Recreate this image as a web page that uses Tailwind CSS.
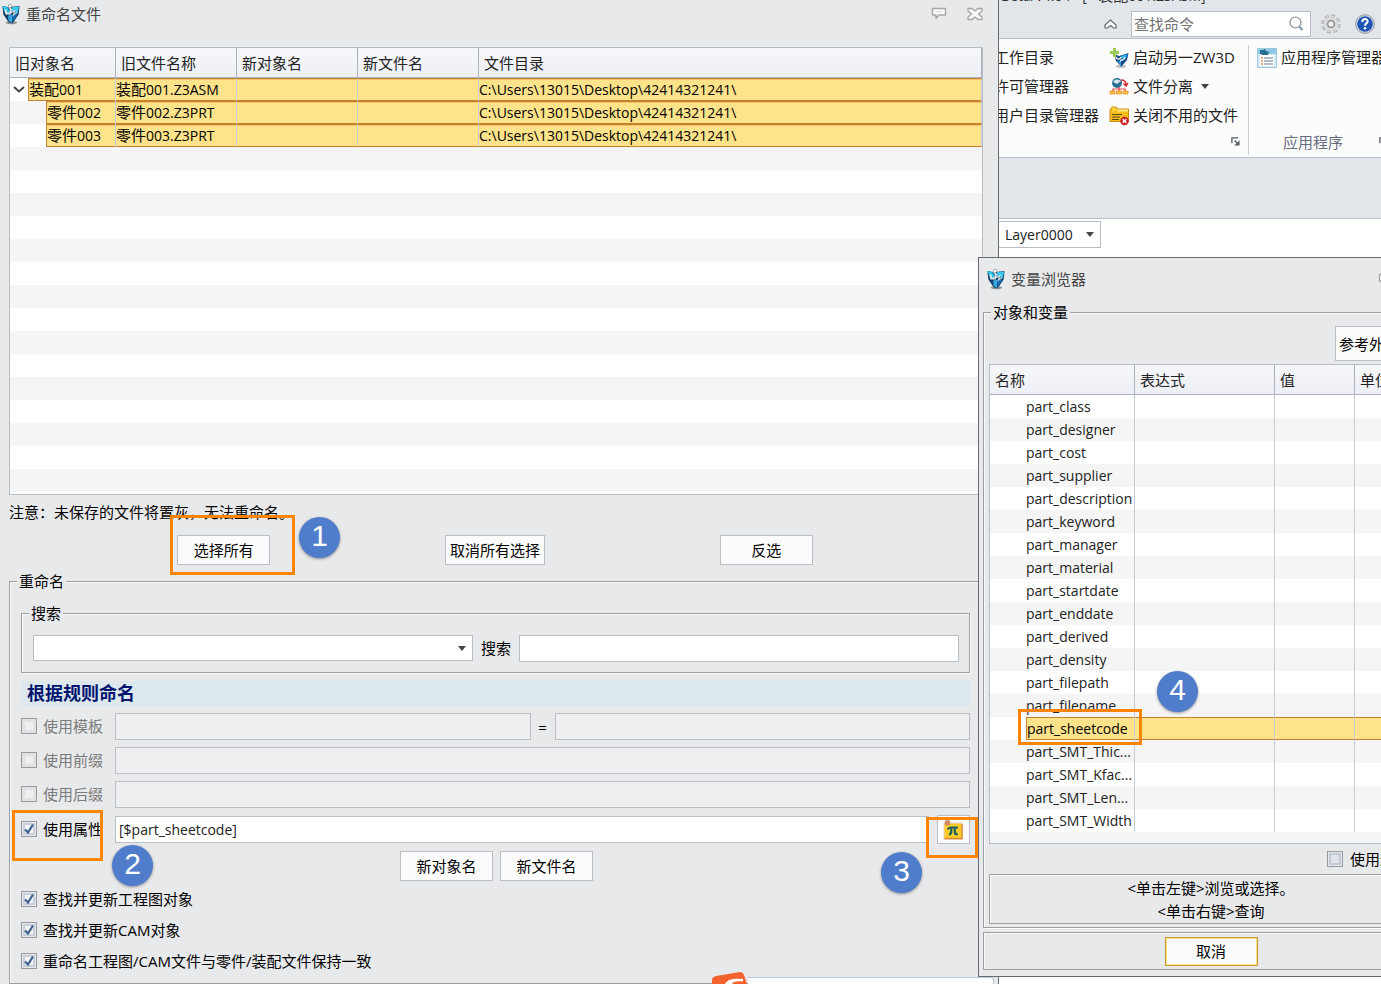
<!DOCTYPE html>
<html lang="zh-CN">
<head>
<meta charset="utf-8">
<title>重命名文件</title>
<script src="https://cdn.jsdelivr.net/npm/@tailwindcss/browser@4"></script>
</head>
<body class="relative h-screen overflow-hidden bg-white font-['Open_Sans','Noto_Sans_CJK_SC',sans-serif] text-[15px] leading-5 text-black">

<svg class="hidden" aria-hidden="true">
  <symbol id="logo" viewBox="0 0 20 22">
    <ellipse cx="10.500" cy="19.500" rx="6" ry="1.800" fill="#8f9599"/>
    <path d="M1 2 7 3.500 19 2 18 11 11.500 20.500 7.500 19 2 11Z" fill="#123f6e"/>
    <path d="M1 2 6 3 9 8 4.500 11Z" fill="#27c4ea"/>
    <path d="M11 3.500 18.500 2.500 17 9.500 11 8Z" fill="#35c9ee"/>
    <path d="M7 12 11.500 11 11 20 7.500 17.500Z" fill="#37a9e0"/>
    <path d="M12 11.500 17 11 11.500 18.500Z" fill="#1570b8"/>
    <path d="M4 5.500 5 10 9 10 10 6 8 3" fill="none" stroke="#dfe7ea" stroke-width="2"/>
    <path d="M10 9 14 7 12.500 11.500 16.500 9" fill="none" stroke="#c9d4d8" stroke-width="1.300"/>
    <circle cx="9" cy="2.200" r="1.900" fill="#fff" stroke="#7d868b" stroke-width=".7"/>
  </symbol>
  <symbol id="bubble" viewBox="0 0 16 14">
    <path d="M1.500 1.500h13v6.500H8L5 11.500V8H1.500Z" fill="#fafafa" stroke="#a3a5a8" stroke-width="1.400" stroke-linejoin="round"/>
    <path d="M4 4.500h8" stroke="#dcdddf"/>
  </symbol>
  <symbol id="tick" viewBox="0 0 16 16">
    <path d="M4 8.500 7 11.500 12 3.500" fill="none" stroke="#3f5f8c" stroke-width="2.200"/>
  </symbol>
  <symbol id="down" viewBox="0 0 8 5"><path d="M0 0h8L4 5Z" fill="#444"/></symbol>
  <symbol id="launch" viewBox="0 0 10 10">
    <path d="M1 7V1h7" fill="none" stroke="#5a5f69" stroke-width="1.500"/><path d="M9.500 3.500v6H3.500Z" fill="#5a5f69"/><path d="M4 4 8 8" stroke="#5a5f69" stroke-width="1.500"/>
  </symbol>
</svg>

<!-- Application window -->
<main class="absolute inset-0 bg-white">
  <header class="relative flex h-[39px] items-center border-b border-[#b8bec6] bg-[#e2e6ea] pt-[9px] pl-[1104px]">
    <p class="absolute -top-[15px] left-[1001px] text-[14px] whitespace-pre text-[#333]">Beta/v4.04 - [ *<span class="text-[15px]">装配</span>001.Z3ASM]</p>
    <button aria-label="折叠功能区"><svg class="h-[10px] w-[13px]" viewBox="0 0 13 10"><path d="M1 6 6.500 1 12 6v3H9.500L6.500 6.500 3.500 9H1Z" fill="#fff" stroke="#666b72" stroke-width="1.200"/></svg></button>
    <div class="ml-[14px] flex h-[26px] w-[180px] shrink-0 items-center border border-[#b8bec6] bg-white pr-1.5 pl-[2px]">
      <input type="text" aria-label="查找命令" placeholder="查找命令" class="min-w-0 flex-1 outline-none placeholder:text-[#737373]">
      <svg class="size-[15px]" viewBox="0 0 15 15"><circle cx="6.500" cy="6.500" r="5.500" fill="#fff" stroke="#888c92" stroke-width="1.200"/><path d="m10.500 11 3 3" stroke="#6e94ab" stroke-width="1.800"/></svg>
    </div>
    <button class="ml-[10px] shrink-0" aria-label="设置"><svg class="size-5" viewBox="0 0 20 20"><circle cx="10" cy="10" r="8" fill="none" stroke="#98999c" stroke-width="3" stroke-dasharray="3.600 2.680"/><circle cx="10" cy="10" r="8" fill="none" stroke="#dcddde" stroke-width="1.500" stroke-dasharray="3 3.280" stroke-dashoffset="-.3"/><circle cx="10" cy="10" r="7" fill="#dcddde"/><circle cx="10" cy="10" r="3.400" fill="#f2f3f4" stroke="#98999c" stroke-width="1.800"/></svg></button>
    <button class="ml-[14px] shrink-0" aria-label="帮助"><svg class="size-5" viewBox="0 0 20 20"><circle cx="10" cy="10" r="9.300" fill="#d9dde3" stroke="#8e959f"/><circle cx="10" cy="10" r="7.800" fill="#2155b5"/><path d="M7.300 8c0-4 5.600-3.600 5.400-.6-.1 2-2.700 2-2.700 4.400" fill="none" stroke="#fff" stroke-width="2"/><circle cx="10" cy="14.300" r="1.300" fill="#fff"/></svg></button>
  </header>
  <section class="flex h-[119px] border-b border-[#b8bec6] bg-[#fcfcfc] pl-[994px] whitespace-nowrap text-[#222]">
    <div class="relative flex w-[255px] shrink-0">
      <ul class="w-[115px] pt-1 leading-[29px]">
        <li>工作目录</li><li>许可管理器</li><li>用户目录管理器</li>
      </ul>
      <ul class="pt-1 leading-[29px]">
        <li class="flex items-center gap-1"><svg class="size-5" viewBox="0 0 20 20"><ellipse cx="12" cy="18.500" rx="5" ry="1.400" fill="#b9bdc0"/><path d="M5 6 10 8 19.500 5 18 12 12.500 18.500 7 13Z" fill="#164b88"/><path d="m12 8 6.500-2-2 5-4.500-1Z" fill="#2bb2e4"/><path d="m8 13 4 0v5Z" fill="#2f93cf"/><path d="M7 9c1 3 4 3 5 0M11 13l4-2 1-2" fill="none" stroke="#e2e9ee" stroke-width="1.500"/><path d="M5.500 0v9M1 4.500h9" stroke="#9ac956" stroke-width="3"/></svg><span>启动另一<span class="text-[15px]">ZW3D</span></span></li>
        <li class="flex items-center gap-1"><svg class="size-5" viewBox="0 0 20 20"><circle cx="8" cy="6" r="5" fill="#2a6f8f"/><path d="M4 5c3-4 6-2 8-1L8 7Z" fill="#d6e6ec"/><path d="M12 3c4 0 5 2 5 5m-2.500-1.500L17 9l2-3" fill="none" stroke="#d8333a" stroke-width="1.600"/><path d="M4 14v-2h12v2M10 10v4" stroke="#e34349" fill="none" stroke-width="1.200"/><path d="M1 14h5v3H1Zm6.500 0h5v3h-5Zm6.500 0h5v3h-5Z" fill="#ffc83a" stroke="#e28b2d" stroke-width=".8"/></svg>文件分离<svg class="ml-1 h-[5px] w-2"><use href="#down"/></svg></li>
        <li class="flex items-center gap-1"><svg class="size-5" viewBox="0 0 20 20"><path d="M1 4 3 1h4l2 2h10.500v12.500H1Z" fill="#f7bd1c" stroke="#cf8b19"/><path d="M8 4.500h11" stroke="#ffe77a" stroke-width="2"/><circle cx="5" cy="3.500" r="2.300" fill="#ffcf3a"/><path d="M3 8.500h10M3 11h8M3 13.500h7" stroke="#5b4715" stroke-width="1.200"/><circle cx="15.500" cy="15" r="4.300" fill="#cd2026"/><path d="m13.700 13.200 3.600 3.600m0-3.600-3.600 3.600" stroke="#fff" stroke-width="1.500"/></svg>关闭不用的文件</li>
      </ul>
      <svg class="absolute right-[9px] bottom-[11px] size-[9px]"><use href="#launch"/></svg>
      <i class="absolute right-0 bottom-0.5 h-[110px] w-px bg-[#c9cfd8]"></i>
    </div>
    <div class="relative flex flex-1 flex-col justify-between pt-1 pb-[5px]">
      <p class="flex items-center gap-1 pl-2 leading-[29px]"><svg class="size-5 shrink-0" viewBox="0 0 20 20"><path d="M.5.500h19v19H.5Z" fill="#d5ebf6" stroke="#9fc7dc"/><path d="M1 1h18v5H1Z" fill="#8cc9e6"/><path d="M3 7h14v11H3Z" fill="#fff"/><path d="M3 2h3l2-1 1 2 3 1-1 3H6L3 6Z" fill="#2a6d92"/><path d="M4 10h2m-2 3h2m-2 3h2" stroke="#e28a5a" stroke-width="1.300"/><path d="M7 10h9m-9 3h9m-9 3h9" stroke="#97a8b2" stroke-width="1.300"/></svg>应用程序管理器</p>
      <p class="pl-[34px] text-[#666b7e]">应用程序</p>
      <svg class="absolute bottom-[11px] left-[130px] size-[9px]"><use href="#launch"/></svg>
    </div>
  </section>
  <div class="h-[60px] bg-[#e2e6e9]"></div>
  <div class="flex border-t border-[#b8bec6] bg-white pt-0.5 pb-[11px] pl-[998px]">
    <label class="flex h-[27px] w-[103px] items-center border border-[#b8bec6] bg-white pr-1.5 pl-1.5">
      <select aria-label="图层" class="min-w-0 flex-1 appearance-none text-[14px] text-[#222]"><option>Layer0000</option></select>
      <svg class="h-[5px] w-2"><use href="#down"/></svg>
    </label>
  </div>
</main>

<!-- Rename dialog -->
<section class="absolute inset-y-0 left-0 flex w-[999px] flex-col border-r border-[#656b72] bg-[#e8e9eb]" aria-label="重命名文件">
  <header class="flex h-[47px] shrink-0 items-start pt-1 pr-[15px] text-[#444]">
    <svg class="ml-px h-[21px] w-5"><use href="#logo"/></svg>
    <h1 class="ml-[5px] flex-1">重命名文件</h1>
    <button class="mt-[3px]" aria-label="反馈"><svg class="h-[14px] w-4"><use href="#bubble"/></svg></button>
    <button class="mt-[3px] ml-5" aria-label="关闭"><svg class="h-[14px] w-4" viewBox="0 0 16 14"><path d="M1 1.500h4L8 4l3-2.500h4V4l-3.500 3 3.500 3v2.500h-4L8 10l-3 2.500H1V10l3.500-3L1 4Z" fill="#fafafa" stroke="#a3a5a8" stroke-width="1.300"/></svg></button>
  </header>

  <div class="mr-[15px] ml-[9px] h-[448px] shrink-0 overflow-hidden border border-[#b6bcc6] bg-[repeating-linear-gradient(to_bottom,#ffffff_0px,#ffffff_23px,#f5f5f5_23px,#f5f5f5_46px)] bg-[position:0_30px]">
    <table class="w-full table-fixed border-separate border-spacing-0 whitespace-nowrap [&_td]:h-[23px] [&_td]:border-r [&_td]:border-r-[#c6ccd8] [&_td]:p-0">
      <colgroup><col class="w-[106px]"><col class="w-[121px]"><col class="w-[121px]"><col class="w-[121px]"><col></colgroup>
      <thead>
        <tr class="h-[30px] bg-linear-to-b from-[#f6f7fa] to-[#eceff4] text-left text-[#222] [&>th]:border-r [&>th]:border-b [&>th]:border-[#a9b1be] [&>th]:py-0 [&>th]:pl-[5px] [&>th]:font-normal">
          <th>旧对象名</th><th>旧文件名称</th><th>新对象名</th><th>新文件名</th><th>文件目录</th>
        </tr>
      </thead>
      <tbody class="[&_td+td]:border-y [&_td+td]:border-y-[#c4822e] [&_td+td]:bg-[#ffe38a] [&_td+td]:shadow-[inset_0_1px_0_#f7c36a]">
        <tr class="bg-white"><td><div class="flex items-center"><svg class="mr-[3px] ml-[3px] h-[7px] w-3" viewBox="0 0 12 7"><path d="m1 1 5 4.500L11 1" fill="none" stroke="#444" stroke-width="2"/></svg><span class="h-[23px] flex-1 border border-r-0 border-[#c4822e] bg-[#ffe38a] shadow-[inset_0_1px_0_#f7c36a]">装配<span class="text-[14px]">001</span></span></div></td><td>装配<span class="text-[14px]">001.Z3ASM</span></td><td></td><td></td><td class="text-[14px]">C:\Users\13015\Desktop\42414321241\</td></tr>
        <tr class="bg-[#f5f5f5]"><td><div class="ml-9 h-[23px] border border-r-0 border-[#c4822e] bg-[#ffe38a] shadow-[inset_0_1px_0_#f7c36a]">零件<span class="text-[14px]">002</span></div></td><td>零件<span class="text-[14px]">002.Z3PRT</span></td><td></td><td></td><td class="text-[14px]">C:\Users\13015\Desktop\42414321241\</td></tr>
        <tr class="bg-white"><td><div class="ml-9 h-[23px] border border-r-0 border-[#c4822e] bg-[#ffe38a] shadow-[inset_0_1px_0_#f7c36a]">零件<span class="text-[14px]">003</span></div></td><td>零件<span class="text-[14px]">003.Z3PRT</span></td><td></td><td></td><td class="text-[14px]">C:\Users\13015\Desktop\42414321241\</td></tr>
      </tbody>
    </table>
  </div>

  <p class="mt-[7px] ml-[9px]">注意：未保存的文件将置灰，无法重命名。</p>
  <div class="mt-[13px] mr-[96px] ml-[88px] grid grid-cols-3 justify-items-center [&>button]:h-[30px] [&>button]:min-w-[93px] [&>button]:border [&>button]:border-[#b9bfc8] [&>button]:bg-[#fcfcfd] [&>button]:px-1 [&>button]:whitespace-nowrap">
    <button>选择所有</button><button>取消所有选择</button><button>反选</button>
  </div>

  <fieldset class="mt-[6px] mr-[15px] ml-[9px] h-[413px] shrink-0 border border-[#9b9ea3] pr-3 pl-[11px] shadow-[inset_1px_1px_0_#fafafa]">
    <legend class="-ml-1 bg-[#e8e9eb] px-[2px]">重命名</legend>
    <fieldset class="mt-3 flex h-[70px] items-start border border-[#9b9ea3] pt-3 pr-[10px] pl-[11px] shadow-[inset_1px_1px_0_#fafafa,1px_1px_0_#fafafa]">
      <legend class="-ml-1 bg-[#e8e9eb] px-[2px]">搜索</legend>
      <div class="flex h-[26px] flex-1 items-center border border-[#b9bfc8] bg-white pr-1.5">
        <select aria-label="搜索类型" class="h-full min-w-0 flex-1 appearance-none"><option></option></select>
        <svg class="h-[5px] w-2"><use href="#down"/></svg>
      </div>
      <label for="find" class="mx-2 mt-[3px]">搜索</label>
      <input id="find" type="text" class="h-[27px] min-w-0 flex-1 border border-[#b9bfc8] bg-white px-[3px]">
    </fieldset>
    <h2 class="mt-2 h-[25px] bg-[#dce7ee] pl-[6px] text-[18px] leading-6 font-bold text-[#00146e]">根据规则命名</h2>

    <div class="mt-[7px] grid grid-cols-[94px_1fr] items-center gap-y-[7px] [&_input[type=checkbox]]:col-start-1 [&_input[type=checkbox]]:row-start-1 [&_input[type=checkbox]]:size-4 [&_input[type=checkbox]]:appearance-none [&_input[type=checkbox]]:border [&_input[type=checkbox]]:border-[#96999d] [&_input[type=text]]:h-[27px] [&_input[type=text]]:min-w-0 [&_input[type=text]]:border [&_input[type=text]]:border-[#b9bfc8] [&_input[type=text]]:px-[3px] [&_label]:flex [&_label]:items-center [&_label]:gap-[6px] [&_label]:pb-[2px] [&_label]:whitespace-nowrap">
      <label class="text-[#7b7b7b]"><input type="checkbox" disabled class="bg-[#f0f0f1] shadow-[inset_0_0_0_3px_#e0e1e3]">使用模板</label>
      <div class="flex items-center"><input type="text" disabled aria-label="模板" class="flex-1 bg-[#efefef]"><span class="w-6 text-center">=</span><input type="text" disabled aria-label="模板值" class="flex-1 bg-[#efefef]"></div>
      <label class="text-[#7b7b7b]"><input type="checkbox" disabled class="bg-[#f0f0f1] shadow-[inset_0_0_0_3px_#e0e1e3]">使用前缀</label>
      <input type="text" disabled aria-label="前缀" class="bg-[#efefef]">
      <label class="text-[#7b7b7b]"><input type="checkbox" disabled class="bg-[#f0f0f1] shadow-[inset_0_0_0_3px_#e0e1e3]">使用后缀</label>
      <input type="text" disabled aria-label="后缀" class="bg-[#efefef]">
      <label><span class="grid"><input type="checkbox" checked class="bg-[#f3f4f7] shadow-[inset_0_0_0_1px_#e6e8ec,inset_0_0_0_3px_#c9d0db]"><svg class="pointer-events-none col-start-1 row-start-1 size-4"><use href="#tick"/></svg></span>使用属性</label>
      <div class="flex items-center"><input type="text" aria-label="属性" value="[$part_sheetcode]" class="flex-1 bg-white text-[14px] text-[#222]">
        <button aria-label="变量浏览器" class="ml-2 flex h-[29px] w-[33px] justify-start border border-[#b9bfc8] bg-[#fcfcfd] pt-1 pl-[5px]"><svg class="h-[21px] w-5" viewBox="0 0 20 21"><path d="M.5 2.500h19v17.500H.5Z" fill="#ecd0c4"/><path d="M1.500 3.500h17V19h-17Z" fill="#ffcb28"/><path d="M1.500 18.500h17.500V4" fill="none" stroke="#dc8f2b" stroke-width="1.500"/><circle cx="4.500" cy="2.800" r="2.800" fill="#c98a62"/><path d="M4.800 9.500C5.500 7.500 6.500 7.500 8.500 7.500H15" fill="none" stroke="#17625f" stroke-width="2"/><path d="M8.300 8v3.500c0 2-.8 2.800-2.300 3M11.800 8v4.500c0 2 1.300 2 2.700 1" fill="none" stroke="#17625f" stroke-width="2.200"/></svg></button></div>
    </div>

    <div class="mt-[7px] flex justify-center gap-[7px] pl-[2px] [&>button]:h-[30px] [&>button]:w-[93px] [&>button]:border [&>button]:border-[#b9bfc8] [&>button]:bg-[#fcfcfd]">
      <button>新对象名</button><button>新文件名</button>
    </div>
    <div class="mt-2 flex flex-col gap-[11px] [&_input]:col-start-1 [&_input]:row-start-1 [&_input]:size-4 [&_input]:appearance-none [&_input]:border [&_input]:border-[#96999d] [&_input]:bg-[#f3f4f7] [&_input]:shadow-[inset_0_0_0_1px_#e6e8ec,inset_0_0_0_3px_#c9d0db] [&_label]:flex [&_label]:h-5 [&_label]:items-center [&_label]:gap-[6px]">
      <label><span class="grid"><input type="checkbox" checked><svg class="pointer-events-none col-start-1 row-start-1 size-4"><use href="#tick"/></svg></span>查找并更新工程图对象</label>
      <label><span class="grid"><input type="checkbox" checked><svg class="pointer-events-none col-start-1 row-start-1 size-4"><use href="#tick"/></svg></span><span>查找并更新<span class="text-[15px]">CAM</span>对象</span></label>
      <label><span class="grid"><input type="checkbox" checked><svg class="pointer-events-none col-start-1 row-start-1 size-4"><use href="#tick"/></svg></span><span>重命名工程图/<span class="text-[15px]">CAM</span>文件与零件/装配文件保持一致</span></label>
    </div>
  </fieldset>
</section>

<!-- Input method bar -->
<div class="absolute bottom-0 left-[712px] flex h-3 w-[282px] items-end">
  <svg class="h-3 w-9 shrink-0" viewBox="0 0 36 12"><path d="M0 12V8Q0 5 4 4L28 0q3 0 4 3l3 9Z" fill="#f4622d"/><path d="M13 12c2-5 9-6 18-5v2.500c-6-.5-10 0-11 2.500Z" fill="#fff"/></svg>
  <i class="h-[7px] flex-1 rounded-tr border-t border-r border-[#bccada] bg-white"></i>
</div>

<!-- Variable browser dialog -->
<section class="absolute top-[257px] left-[978px] flex h-[720px] w-[466px] flex-col border border-[#656b72] bg-[#e8e9eb] pr-1 pl-1" aria-label="变量浏览器">
  <header class="flex h-11 shrink-0 items-start pt-[11px] text-[#444]">
    <svg class="ml-[3px] h-[21px] w-5"><use href="#logo"/></svg>
    <h1 class="ml-[5px] flex-1">变量浏览器</h1>
    <button class="mt-1 mr-[45px]" aria-label="反馈"><svg class="h-[14px] w-4"><use href="#bubble"/></svg></button>
  </header>
  <fieldset class="h-[626px] shrink-0 border border-[#9b9ea3] px-[5px] shadow-[inset_1px_1px_0_#fafafa,0_1px_0_#fafafa]">
    <legend class="ml-[2px] bg-[#e8e9eb] px-[2px]">对象和变量</legend>
    <div class="mt-[4px] flex justify-end pr-1">
      <button class="h-[35px] w-[94px] border border-[#b9bfc8] bg-[#fcfcfd] pl-[3px] text-left whitespace-nowrap">参考外部</button>
    </div>
    <div class="mt-[3px] h-[480px] overflow-hidden border border-[#b6bcc6] bg-[#f5f5f5]">
      <table class="w-full table-fixed border-separate border-spacing-0 whitespace-nowrap text-[#222] [&_td]:h-[23px] [&_td]:border-r [&_td]:border-r-[#c6ccd8] [&_td]:p-0 [&_td:first-child]:pl-9 [&_td]:text-[14px] [&_tbody>tr:nth-child(odd)]:bg-white">
        <colgroup><col class="w-[145px]"><col class="w-[140px]"><col class="w-20"><col></colgroup>
        <thead>
          <tr class="h-[30px] bg-linear-to-b from-[#f6f7fa] to-[#eceff4] text-left [&>th]:border-r [&>th]:border-b [&>th]:border-[#a9b1be] [&>th]:py-0 [&>th]:pl-[5px] [&>th]:font-normal">
            <th>名称</th><th>表达式</th><th>值</th><th>单位</th>
          </tr>
        </thead>
        <tbody>
          <tr><td>part_class</td><td></td><td></td><td></td></tr>
          <tr><td>part_designer</td><td></td><td></td><td></td></tr>
          <tr><td>part_cost</td><td></td><td></td><td></td></tr>
          <tr><td>part_supplier</td><td></td><td></td><td></td></tr>
          <tr><td>part_description</td><td></td><td></td><td></td></tr>
          <tr><td>part_keyword</td><td></td><td></td><td></td></tr>
          <tr><td>part_manager</td><td></td><td></td><td></td></tr>
          <tr><td>part_material</td><td></td><td></td><td></td></tr>
          <tr><td>part_startdate</td><td></td><td></td><td></td></tr>
          <tr><td>part_enddate</td><td></td><td></td><td></td></tr>
          <tr><td>part_derived</td><td></td><td></td><td></td></tr>
          <tr><td>part_density</td><td></td><td></td><td></td></tr>
          <tr><td>part_filepath</td><td></td><td></td><td></td></tr>
          <tr><td>part_filename</td><td></td><td></td><td></td></tr>
          <tr class="text-black [&>td+td]:border-y [&>td+td]:border-y-[#c4822e] [&>td+td]:bg-[#ffe38a]"><td><div class="h-[23px] border border-r-0 border-[#c4822e] bg-[#ffe38a] leading-[21px]">part_sheetcode</div></td><td></td><td></td><td></td></tr>
          <tr><td>part_SMT_Thic...</td><td></td><td></td><td></td></tr>
          <tr><td>part_SMT_Kfac...</td><td></td><td></td><td></td></tr>
          <tr><td>part_SMT_Len...</td><td></td><td></td><td></td></tr>
          <tr><td>part_SMT_Width</td><td></td><td></td><td></td></tr>
        </tbody>
      </table>
    </div>
    <label class="mt-[5px] flex items-center gap-[7px] pl-[338px] whitespace-nowrap"><input type="checkbox" class="size-4 shrink-0 appearance-none border border-[#96999d] bg-[#dfe3ea] shadow-[inset_0_0_0_1px_#e6e8ec,inset_0_0_0_3px_#c2cad6]">使用过滤器</label>
    <p class="mt-[5px] h-[50px] border border-[#9b9ea3] pt-[2px] text-center leading-[23px] shadow-[inset_1px_1px_0_#fafafa]">&lt;单击左键&gt;浏览或选择。<br>&lt;单击右键&gt;查询</p>
  </fieldset>
  <footer class="mt-1 flex h-[38px] items-center justify-center border border-[#9b9ea3] shadow-[inset_1px_1px_0_#fafafa]">
    <button class="h-[29px] w-[93px] border border-[#c79a2f] bg-[#fcfcfd] shadow-[inset_0_0_0_1px_#ffe38a]">取消</button>
  </footer>
</section>

<!-- Step annotations -->
<div class="pointer-events-none [&>b]:absolute [&>b]:flex [&>b]:size-[41px] [&>b]:items-center [&>b]:justify-center [&>b]:rounded-full [&>b]:bg-[#4f7dcc] [&>b]:pb-[3px] [&>b]:font-['Liberation_Sans',sans-serif] [&>b]:text-[30px] [&>b]:font-normal [&>b]:text-white [&>b]:shadow-[0_1px_3px_#0006] [&>i]:absolute [&>i]:border-3 [&>i]:border-[#ff8400]">
  <i class="top-[515px] left-[170px] h-[60px] w-[125px]"></i><b class="top-[517px] left-[299px]">1</b>
  <i class="top-[810px] left-3 h-[51px] w-[91px]"></i><b class="top-[845px] left-[112px]">2</b>
  <i class="top-[817px] left-[926px] h-[41px] w-[52px]"></i><b class="top-[852px] left-[881px]">3</b>
  <i class="top-[709px] left-[1018px] h-[36px] w-[124px]"></i><b class="top-[671px] left-[1157px]">4</b>
</div>
</body>
</html>
